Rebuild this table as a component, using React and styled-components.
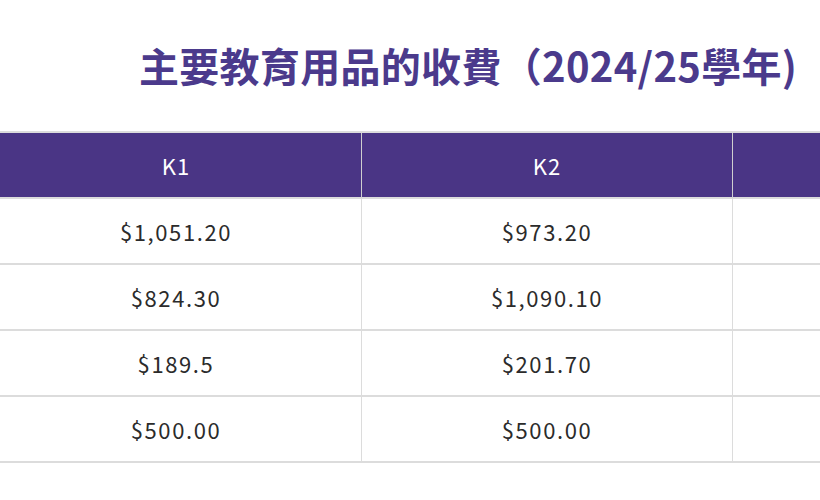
import React from 'react';
import styled, { createGlobalStyle } from 'styled-components';

const GlobalStyle = createGlobalStyle`
  html, body {
    margin: 0;
    padding: 0;
    background: #fff;
    overflow: hidden;
  }
  body {
    font-family: "Noto Sans CJK TC", "Noto Sans", sans-serif;
  }
`;

const Page = styled.div`
  width: 820px;
  height: 500px;
  overflow: hidden;
`;

const Title = styled.h2`
  margin: 0;
  padding: 42px 0 0 139px;
  height: 131px;
  box-sizing: border-box;
  font-size: 40px;
  line-height: 46px;
  font-weight: 700;
  letter-spacing: 0.3px;
  color: #4b3a8c;
  white-space: nowrap;
`;

const Table = styled.div`
  display: grid;
  grid-template-columns: 240px repeat(3, 371px);
  margin-left: -250px;
  width: max-content;
  border-top: 2px solid #dcdcdc;
`;

const HeadCell = styled.div`
  height: 64px;
  display: flex;
  align-items: center;
  justify-content: center;
  background: #4a3585;
  color: #fff;
  font-size: 22px;
  letter-spacing: 1px;
  border-left: 1px solid #cfcfcf;
  border-bottom: 2px solid #dcdcdc;
`;

const Cell = styled.div`
  height: 64px;
  display: flex;
  align-items: center;
  justify-content: center;
  color: #2b2b2b;
  font-size: 22px;
  letter-spacing: 1.6px;
  border-left: 1px solid #dcdcdc;
  border-bottom: 2px solid #dcdcdc;
`;

const heads = ['', 'K1', 'K2', ''];

const rows = [
  ['', '$1,051.20', '$973.20', ''],
  ['', '$824.30', '$1,090.10', ''],
  ['', '$189.5', '$201.70', ''],
  ['', '$500.00', '$500.00', ''],
];

export default function App() {
  return (
    <Page>
      <GlobalStyle />
      <Title>主要教育用品的收費（2024/25學年)</Title>
      <Table>
        {heads.map((h, i) => (
          <HeadCell key={i}>{h}</HeadCell>
        ))}
        {rows.map((r, ri) =>
          r.map((c, ci) => <Cell key={`${ri}-${ci}`}>{c}</Cell>)
        )}
      </Table>
    </Page>
  );
}
